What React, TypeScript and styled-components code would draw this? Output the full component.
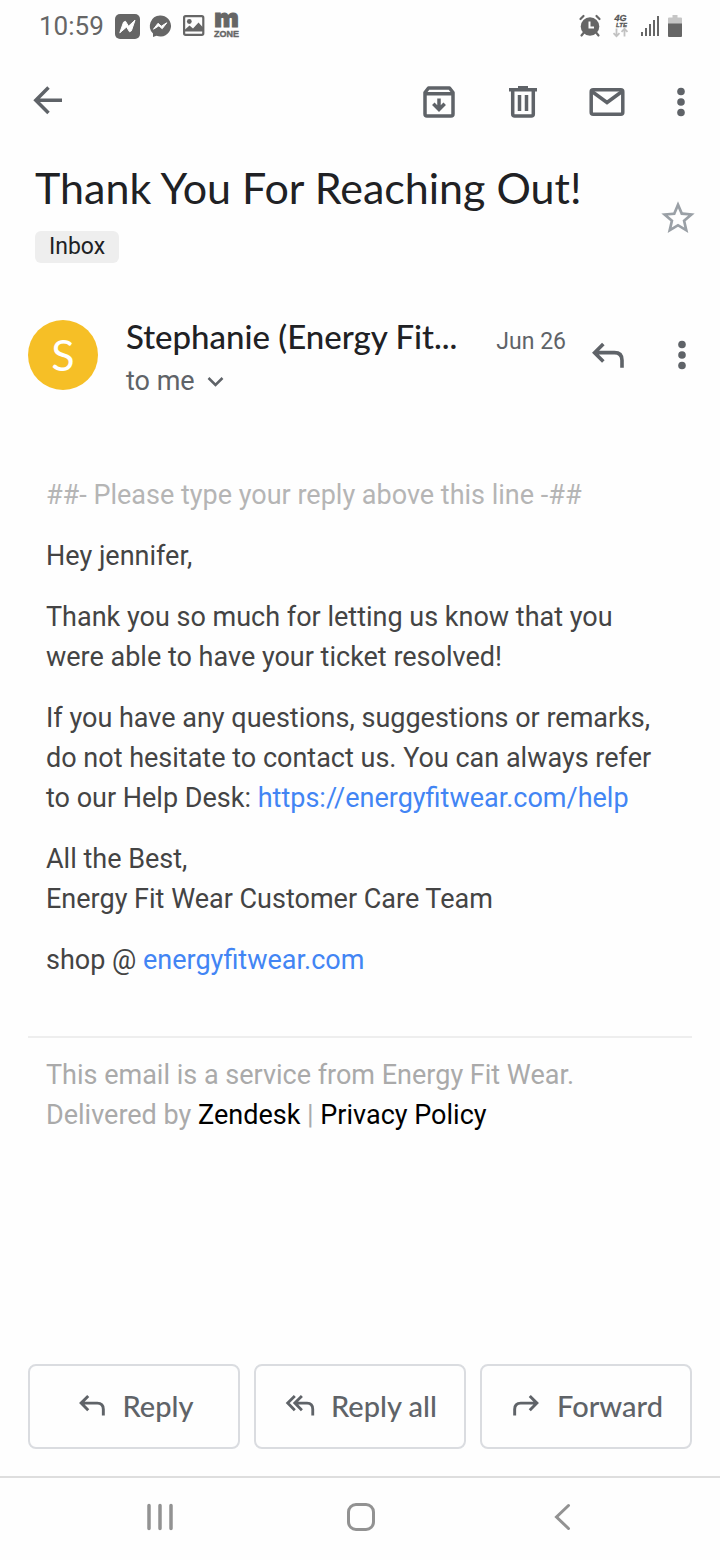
import React from "react";
import styled, { createGlobalStyle } from "styled-components";

const display = `Lato, Roboto, sans-serif`;
const text = `Roboto, "Liberation Sans", sans-serif`;

const GlobalStyle = createGlobalStyle`
  * { box-sizing: border-box; }
  body { margin: 0; background: #fefefe; font-family: ${text}; color: #202124; }
  button { border: 0; padding: 0; background: none; font: inherit; color: inherit; cursor: pointer; }
  h1, h2, p { margin: 0; font-weight: 400; }
  svg { display: block; flex: none; overflow: visible; }
`;

const Screen = styled.div`
  display: flex;
  flex-direction: column;
  min-height: 100vh;
`;

const StatusBar = styled.div`
  display: flex;
  align-items: center;
  justify-content: space-between;
  height: 52px;
  padding: 0 38px 0 39px;
  color: #666;
`;

const StatusGroup = styled.div`
  display: flex;
  align-items: center;
  gap: 9px;
`;

const Clock = styled.span`
  font-size: 26px;
  line-height: 32px;
  margin-right: 2px;
`;

const AppBar = styled.header`
  display: flex;
  align-items: center;
  justify-content: space-between;
  height: 100px;
  padding: 0 18px 0 27px;
  color: #5f6368;
`;

const Actions = styled.div`
  display: flex;
  gap: 42px;
`;

const IconButton = styled.button<{ $pull?: boolean }>`
  display: flex;
  margin-left: ${(p) => (p.$pull ? "-10px" : "0")};
  color: inherit;
`;

const SubjectRow = styled.section`
  display: flex;
  align-items: center;
  justify-content: space-between;
  padding: 11px 22px 0 35px;
`;

const Subject = styled.h1`
  font-family: ${display};
  font-size: 43px;
  line-height: 50px;
`;

const Chip = styled.button`
  display: block;
  height: 32px;
  margin-top: 18px;
  padding: 0 14px;
  border-radius: 6px;
  background: #eee;
  font-size: 23px;
  line-height: 32px;
`;

const StarButton = styled(IconButton)`
  color: #9aa0a6;
  margin-top: 9px;
`;

const SenderRow = styled.section`
  display: flex;
  align-items: center;
  margin-top: 43px;
  padding: 0 17px 0 28px;
  color: #5f6368;
`;

const Avatar = styled.div`
  display: flex;
  align-items: center;
  justify-content: center;
  flex: none;
  width: 70px;
  height: 70px;
  padding-bottom: 2px;
  border-radius: 50%;
  background: #f6bf26;
  color: #fff;
  font-family: ${display};
  font-size: 43px;
`;

const SenderInfo = styled.div`
  flex: 1;
  min-width: 0;
  margin-left: 28px;
  padding-top: 8px;
`;

const SenderLine = styled.div`
  display: flex;
  align-items: baseline;
  justify-content: space-between;
`;

const SenderName = styled.h2`
  font-family: ${display};
  font-size: 33px;
  line-height: 44px;
  font-weight: 500;
  color: #202124;
  white-space: nowrap;
`;

const SentDate = styled.time`
  font-size: 23px;
`;

const Recipient = styled.button`
  display: flex;
  align-items: center;
  gap: 10px;
  font-size: 27px;
  line-height: 46px;
`;

const SenderActions = styled.div`
  display: flex;
  gap: 32px;
  margin-left: 21px;
`;

const Message = styled.article`
  display: flex;
  flex-direction: column;
  gap: 21px;
  margin-top: 71px;
  padding: 0 46px;
  font-size: 27px;
  line-height: 40px;
  color: #444;

  a { color: #4285f4; text-decoration: none; }
`;

const Marker = styled.p`
  color: #b5b5b5;
`;

const Footer = styled.footer`
  margin: 56px 28px 0;
  padding: 17px 18px 0;
  border-top: 2px solid #eee;
  font-size: 27px;
  line-height: 40px;
  color: #aaa;

  a { color: #000; text-decoration: none; }
`;

const ReplyBar = styled.div`
  display: grid;
  grid-template-columns: repeat(3, 1fr);
  gap: 14px;
  margin-top: auto;
  padding: 28px 28px 27px;
`;

const ReplyButton = styled.button`
  display: flex;
  align-items: center;
  justify-content: center;
  gap: 14px;
  height: 85px;
  padding-bottom: 3px;
  border: 2px solid #dadce0;
  border-radius: 8px;
  color: #5f6368;
  font-family: ${display};
  font-size: 29px;
  font-weight: 500;
  white-space: nowrap;
`;

const SystemNav = styled.nav`
  display: grid;
  grid-template-columns: repeat(3, 1fr);
  justify-items: center;
  align-items: center;
  height: 84px;
  padding: 0 57px 5px 59px;
  border-top: 2px solid #dedede;
  color: #929292;
`;

function Dots() {
  return (
    <svg width="42" height="42" viewBox="0 0 42 42" fill="currentColor">
      <circle cx="21" cy="10.5" r="3.8" />
      <circle cx="21" cy="21" r="3.8" />
      <circle cx="21" cy="31.5" r="3.8" />
    </svg>
  );
}

function ReplyIcon({ size = 34, flip = false }: { size?: number; flip?: boolean }) {
  return (
    <svg width={size} height={size} viewBox="0 0 36 36" fill="none" stroke="currentColor" strokeWidth="3.100">
      <g transform={flip ? "translate(36 0) scale(-1 1)" : undefined}>
        <path d="M14 8.500 6.500 16 14 23.500M6.500 16H23.500q6.500 0 6.500 6.500V29" />
      </g>
    </svg>
  );
}

export default function App() {
  return (
    <Screen>
      <GlobalStyle />
      <StatusBar>
        <StatusGroup>
          <Clock>10:59</Clock>
          <svg width="25" height="25" viewBox="0 0 25 25">
            <rect width="25" height="25" rx="5" fill="#666" />
            <path d="M4.800 18.800 8.500 8.200 10.500 7.300 13.500 12.200 20 6.200 16.400 16.800 14.500 17.800 11.600 13Z" fill="#fff" stroke="#fff" strokeWidth="1" strokeLinejoin="round" />
          </svg>
          <svg width="22" height="24" viewBox="0 0 22 24">
            <path d="M11 1.500A10.500 10.500 0 1 1 7.500 21.700L4 23V19.500A10.500 10.500 0 0 1 11 1.500Z" fill="#666" />
            <path d="M4.500 15.200 9 9.300 12.300 12.200 17.800 8.800 13.200 14.700 9.900 11.800Z" fill="#fff" stroke="#fff" strokeWidth="1" strokeLinejoin="round" />
          </svg>
          <svg width="25" height="22" viewBox="0 0 25 22">
            <rect x="4.100" y="1.200" width="19.200" height="18.600" rx="1.500" fill="none" stroke="#666" strokeWidth="2.200" />
            <circle cx="9.300" cy="6.500" r="2.400" fill="#666" />
            <path d="M5 16.500V14.500L9.500 10.500 13 13.500 18.500 7.500 23 12.500V16.500Z" fill="#666" />
          </svg>
          <svg width="28" height="28" viewBox="0 0 28 28" fill="#666">
            <text x="12.500" y="15" fontFamily="Inter" fontWeight="900" fontSize="26" textAnchor="middle" stroke="#666" strokeWidth="1">m</text>
            <text x="12.500" y="25" fontFamily="Liberation Sans" fontWeight="700" fontSize="9" textAnchor="middle" stroke="#666" strokeWidth=".4">ZONE</text>
          </svg>
        </StatusGroup>
        <StatusGroup>
          <svg width="24" height="24" viewBox="0 0 24 24" fill="none" stroke="#666" strokeWidth="2.200" strokeLinecap="round">
            <circle cx="12" cy="12.500" r="9.300" fill="#666" stroke="none" />
            <path d="M2.500 5 5.500 2M21.500 5 18.500 2M5.500 19 3.500 21.500M18.500 19 20.500 21.500" />
            <path d="M11.500 7.500V13.500H16" stroke="#fff" strokeWidth="2" strokeLinecap="butt" />
          </svg>
          <svg width="20" height="26" viewBox="0 0 20 26">
            <text x="9.500" y="8" fontFamily="Liberation Sans" fontStyle="italic" fontWeight="700" fontSize="9" textAnchor="middle" fill="#555" stroke="#555" strokeWidth=".3">4G</text>
            <text x="10.500" y="14" fontFamily="Liberation Sans" fontStyle="italic" fontWeight="700" fontSize="6" textAnchor="middle" fill="#555" stroke="#555" strokeWidth=".3">LTE</text>
            <path d="M5.500 15.500V23M2.500 20.200 5.500 23.200 8.500 20.200M13.500 23.500V16M10.500 18.800 13.500 15.800 16.500 18.800" fill="none" stroke="#c2c2c2" strokeWidth="1.800" />
          </svg>
          <svg width="19" height="22" viewBox="0 0 19 22" fill="#666">
            <path d="M1 17h2v4H1zM5 13h2v8H5zM9 9h2v12H9zM13 5h2v16h-2zM17 1h2v20h-2z" />
          </svg>
          <svg width="14" height="22" viewBox="0 0 14 22">
            <path d="M4.500 0h5v2.500H13q1 0 1 1V9H0V3.500q0-1 1-1h3.500z" fill="#c6c6c6" />
            <path d="M0 8.500h14V21q0 1-1 1H1q-1 0-1-1z" fill="#666" />
          </svg>
        </StatusGroup>
      </StatusBar>

      <AppBar>
        <IconButton aria-label="Back">
          <svg width="42" height="42" viewBox="0 0 42 42" fill="none" stroke="currentColor" strokeWidth="3.500">
            <path d="M21.500 6.500 8.800 19.200 21.500 32M9 19.200H35" />
          </svg>
        </IconButton>
        <Actions>
          <IconButton aria-label="Archive">
            <svg width="42" height="42" viewBox="0 0 42 42" fill="none" stroke="currentColor" strokeWidth="3.500" strokeLinejoin="round">
              <path d="M7 11.500V33Q7 35 9 35H33Q35 35 35 33V11.500L31.500 7H10.500ZM7 12.700H35" />
              <path d="M21 17.500V28M15.300 22.800 21 28.500 26.700 22.800" strokeLinejoin="miter" />
            </svg>
          </IconButton>
          <IconButton aria-label="Delete">
            <svg width="42" height="42" viewBox="0 0 42 42" fill="none" stroke="currentColor" strokeWidth="3.500">
              <path d="M7 8.700H35M16 6.800H26M10.700 9V33Q10.700 35 12.700 35H29.300Q31.300 35 31.300 33V9M17.500 14V30M24.500 14V30" />
            </svg>
          </IconButton>
          <IconButton aria-label="Mark unread">
            <svg width="42" height="42" viewBox="0 0 42 42" fill="none" stroke="currentColor" strokeWidth="3.500">
              <rect x="5.200" y="8.700" width="31.600" height="24.600" rx="2" />
              <path d="M6 10.500 21 21.500 36 10.500" />
            </svg>
          </IconButton>
          <IconButton aria-label="More options" $pull>
            <Dots />
          </IconButton>
        </Actions>
      </AppBar>

      <SubjectRow>
        <div>
          <Subject>Thank You For Reaching Out!</Subject>
          <Chip>Inbox</Chip>
        </div>
        <StarButton aria-label="Star">
          <svg width="40" height="40" viewBox="0 0 24 24" fill="currentColor">
            <path d="M22 9.240l-7.190-.62L12 2 9.190 8.630 2 9.240l5.460 4.730L5.820 21 12 17.270 18.180 21l-1.630-7.030L22 9.240zM12 15.400l-3.760 2.270 1-4.280-3.320-2.880 4.380-.38L12 6.100l1.710 4.040 4.380.38-3.320 2.880 1 4.280L12 15.400z" />
          </svg>
        </StarButton>
      </SubjectRow>

      <SenderRow>
        <Avatar>S</Avatar>
        <SenderInfo>
          <SenderLine>
            <SenderName>Stephanie (Energy Fit...</SenderName>
            <SentDate>Jun 26</SentDate>
          </SenderLine>
          <Recipient>
            to me
            <svg width="20" height="20" viewBox="0 0 20 20" fill="none" stroke="currentColor" strokeWidth="2.500">
              <path d="M3.500 7 10.500 14 17.500 7" />
            </svg>
          </Recipient>
        </SenderInfo>
        <SenderActions>
          <IconButton aria-label="Reply">
            <ReplyIcon size={42} />
          </IconButton>
          <IconButton aria-label="Message options">
            <Dots />
          </IconButton>
        </SenderActions>
      </SenderRow>

      <Message>
        <Marker>##- Please type your reply above this line -##</Marker>
        <p>Hey jennifer,</p>
        <p>Thank you so much for letting us know that you were able to have your ticket resolved!</p>
        <p>
          If you have any questions, suggestions or remarks, do not hesitate to contact us. You can always refer to our
          Help Desk: <a href="https://energyfitwear.com/help">https://energyfitwear.com/help</a>
        </p>
        <p>
          All the Best,
          <br />
          Energy Fit Wear Customer Care Team
        </p>
        <p>
          shop @ <a href="https://energyfitwear.com">energyfitwear.com</a>
        </p>
      </Message>

      <Footer>
        This email is a service from Energy Fit Wear.
        <br />
        Delivered by <a href="#zendesk">Zendesk</a> | <a href="#privacy">Privacy Policy</a>
      </Footer>

      <ReplyBar>
        <ReplyButton>
          <ReplyIcon />
          Reply
        </ReplyButton>
        <ReplyButton>
          <svg width="34" height="34" viewBox="0 0 36 36" fill="none" stroke="currentColor" strokeWidth="3">
            <path d="M12.500 8.500 5 16 12.500 23.500M20 8.500 12.500 16 20 23.500M12.500 16H25.500q6 0 6 6.500V29" />
          </svg>
          Reply all
        </ReplyButton>
        <ReplyButton>
          <ReplyIcon flip />
          Forward
        </ReplyButton>
      </ReplyBar>

      <SystemNav>
        <IconButton aria-label="Recent apps">
          <svg width="30" height="30" viewBox="0 0 30 30" fill="none" stroke="currentColor" strokeWidth="3.500" strokeLinecap="round">
            <path d="M4 3.500V26.500M15 3.500V26.500M26 3.500V26.500" />
          </svg>
        </IconButton>
        <IconButton aria-label="Home">
          <svg width="30" height="30" viewBox="0 0 30 30" fill="none" stroke="currentColor" strokeWidth="3">
            <rect x="2.500" y="2.500" width="25" height="25" rx="7.500" />
          </svg>
        </IconButton>
        <IconButton aria-label="Back to previous screen">
          <svg width="30" height="30" viewBox="0 0 30 30" fill="none" stroke="currentColor" strokeWidth="3" strokeLinecap="round">
            <path d="M21.500 3.500 9.500 15 21.500 26.500" />
          </svg>
        </IconButton>
      </SystemNav>
    </Screen>
  );
}
